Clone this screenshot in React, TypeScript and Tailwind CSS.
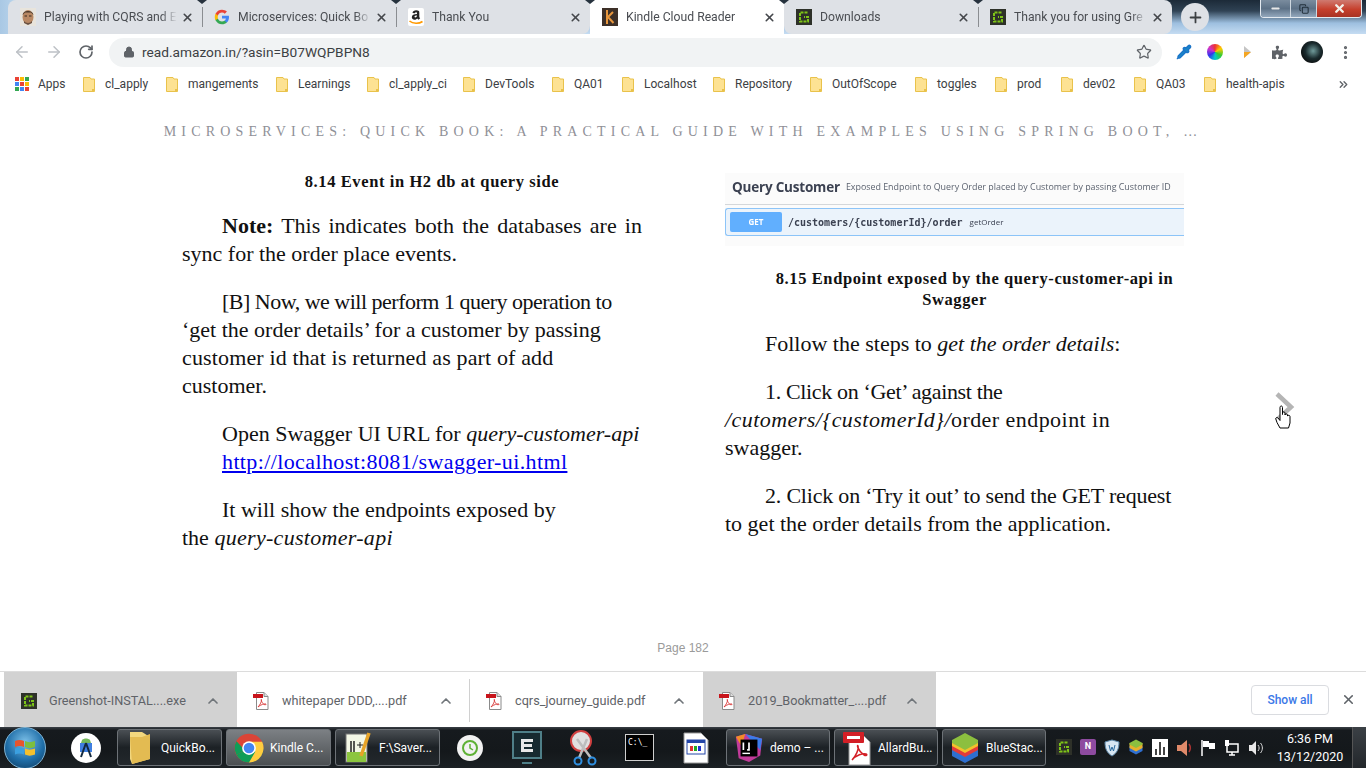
import { ArrowLeft, ArrowRight, RotateCw, Lock, Star, Pipette, EllipsisVertical, ChevronUp, ChevronsRight, X, Plus, Minus, Copy } from 'lucide-react';
import { FaPuzzlePiece } from 'react-icons/fa';
import type { ReactNode } from 'react';

const uiFont = "font-['Roboto','Liberation_Sans',sans-serif]";
const bookFont = "font-['Liberation_Serif','DejaVu_Serif',serif]";

function FaceIcon() {
  return (
    <svg width="16" height="18" viewBox="0 0 16 18">
      <rect width="16" height="18" fill="#e8e4dc" />
      <ellipse cx="8" cy="9" rx="5.5" ry="7" fill="#b98863" />
      <path d="M2.5 7C3 1.5 13 1.5 13.5 7L11 4.5H5Z" fill="#4b3a2c" />
      <rect x="4.5" y="7.5" width="2.5" height="1" fill="#3c2c20" />
      <rect x="9" y="7.5" width="2.5" height="1" fill="#3c2c20" />
      <path d="M4 13c2 2.500 6 2.500 8 0v2l-4 2-4-2Z" fill="#6a5040" />
    </svg>
  );
}

function GoogleIcon() {
  return (
    <svg width="16" height="16" viewBox="0 0 48 48">
      <path fill="#4285F4" d="M45 24.500c0-1.600-.1-3.100-.4-4.500H24v8.500h11.800c-.5 2.700-2 5-4.400 6.600v5.500h7.100C42.700 36.700 45 31.100 45 24.500z" />
      <path fill="#34A853" d="M24 46c5.900 0 10.900-2 14.500-5.300l-7.100-5.500c-2 1.300-4.500 2.100-7.400 2.100-5.700 0-10.500-3.800-12.200-9H4.500v5.700C8.100 41.100 15.500 46 24 46z" />
      <path fill="#FBBC05" d="M11.800 28.300c-.9-2.700-.9-5.800 0-8.500V14H4.500c-3 6-3 13.900 0 20z" />
      <path fill="#EA4335" d="M24 10.700c3.200 0 6.100 1.100 8.400 3.300l6.300-6.300C34.900 4.100 29.900 2 24 2 15.500 2 8.100 6.900 4.500 14l7.300 5.700c1.700-5.200 6.500-9 12.200-9z" />
    </svg>
  );
}

function AmazonIcon() {
  return (
    <svg width="16" height="18" viewBox="0 0 16 18">
      <rect width="16" height="18" rx="2" fill="#fff" />
      <path d="M11 3C9 1.500 4.800 1.800 4.500 5L7 5.300C7.200 3.800 9 3.900 9 5V6C6 6 3.800 7 3.800 9.300 3.800 12 7.500 12.500 9.200 10.500L10.500 11.800 12.200 10.300C11.300 9.300 11.300 8.800 11.300 8V5C11.300 4.200 11.300 3.500 11 3ZM9 7.600C9 9.500 6.500 10 6.500 8.800 6.500 7.800 7.700 7.600 9 7.600Z" fill="#222" />
      <path d="M1.500 13C5 16 11 16 14.500 13.500" stroke="#f90" strokeWidth="1.600" fill="none" />
    </svg>
  );
}

function KindleIcon() {
  return (
    <svg width="16" height="18" viewBox="0 0 16 18">
      <rect width="16" height="18" fill="#3d3028" />
      <path d="M5 2V16M5 10L11 4M6 9L11.500 15" stroke="#e8963c" strokeWidth="2" fill="none" />
    </svg>
  );
}

function GreenshotIcon({ size = 16 }: { size?: number }) {
  return (
    <svg width={size} height={size} viewBox="0 0 16 16">
      <rect width="16" height="16" fill="#2e3129" />
      <path d="M11.500 3.500H4V12.500H12V8H8" stroke="#7ec517" strokeWidth="2" fill="none" strokeDasharray="3 1" />
    </svg>
  );
}

function FolderIcon() {
  return (
    <svg width="12" height="15" viewBox="0 0 12 15">
      <path d="M.5.500H7L8 2H11.500V14.500H.5Z" fill="#fde293" stroke="#e9c24b" />
      <rect x="9" y="12" width="2" height="2" fill="#e9c24b" />
    </svg>
  );
}

function PdfIcon() {
  return (
    <svg width="17" height="18" viewBox="0 0 17 18">
      <path d="M3.500.5H11L15 4.500V17.500H3.500Z" fill="#fff" stroke="#8a8a8a" />
      <path d="M11 .5V4.500H15" fill="#ddd" stroke="#8a8a8a" />
      <rect x="0" y="2" width="10" height="4" fill="#c8141b" />
      <path d="M5 15C7 13 9 9 8.500 7.500 8 6.500 7.500 9 11 12.500 12.500 13 13.500 12.500 13 12 12 11.500 7.500 12.500 5 15Z" fill="none" stroke="#d83a3a" strokeWidth=".9" />
    </svg>
  );
}

function AppsIcon() {
  const colors = ['#ea4335', '#fbbc05', '#34a853', '#4285f4', '#ea4335', '#fbbc05', '#34a853', '#4285f4', '#ea4335'];
  return (
    <svg width="14" height="14" viewBox="0 0 14 14">
      {colors.map((c, i) => (
        <rect key={i} x={(i % 3) * 5} y={Math.floor(i / 3) * 5} width="4" height="4" fill={c} />
      ))}
    </svg>
  );
}

const tabs: { title: string; icon: ReactNode; active?: boolean; sep?: boolean; notch?: boolean }[] = [
  { title: 'Playing with CQRS and E', icon: <FaceIcon />, sep: true, notch: true },
  { title: 'Microservices: Quick Bo', icon: <GoogleIcon />, sep: true, notch: true },
  { title: 'Thank You', icon: <AmazonIcon />, notch: true },
  { title: 'Kindle Cloud Reader', icon: <KindleIcon />, active: true, notch: true },
  { title: 'Downloads', icon: <GreenshotIcon />, sep: true, notch: true },
  { title: 'Thank you for using Gre', icon: <GreenshotIcon /> },
];

const bookmarks = [
  { label: 'cl_apply', w: 'w-[83px]' },
  { label: 'mangements', w: 'w-[110px]' },
  { label: 'Learnings', w: 'w-[91px]' },
  { label: 'cl_apply_ci', w: 'w-[96px]' },
  { label: 'DevTools', w: 'w-[89px]' },
  { label: 'QA01', w: 'w-[70px]' },
  { label: 'Localhost', w: 'w-[91px]' },
  { label: 'Repository', w: 'w-[97px]' },
  { label: 'OutOfScope', w: 'w-[105px]' },
  { label: 'toggles', w: 'w-[80px]' },
  { label: 'prod', w: 'w-[66px]' },
  { label: 'dev02', w: 'w-[73px]' },
  { label: 'QA03', w: 'w-[70px]' },
  { label: 'health-apis', w: 'w-[110px]' },
];

const downloads: { name: string; icon: ReactNode; hover?: boolean; sep?: boolean }[] = [
  { name: 'Greenshot-INSTAL....exe', icon: <GreenshotIcon />, hover: true },
  { name: 'whitepaper DDD,....pdf', icon: <PdfIcon />, sep: true },
  { name: 'cqrs_journey_guide.pdf', icon: <PdfIcon /> },
  { name: '2019_Bookmatter_....pdf', icon: <PdfIcon />, hover: true },
];

function Tab({ title, icon, active, sep, notch }: { title: string; icon: ReactNode; active?: boolean; sep?: boolean; notch?: boolean }) {
  return (
    <div className={`relative flex h-[34px] w-[194px] items-center pl-3 pr-[8px] ${active ? 'bg-white' : ''}`}>
      <div className="flex w-4 justify-center">{icon}</div>
      <div className="ml-2 flex-1 overflow-hidden whitespace-nowrap text-[12.200px] text-[#4a4d52] [mask-image:linear-gradient(to_right,black_88%,transparent)]">{title}</div>
      <X size={13} strokeWidth={3} className="ml-1 text-[#44474b]" />
      {sep && <div className="ml-[8px] mr-[-9px] h-5 w-px bg-[#8a8d91]" />}
      {notch && (
        <svg width="10" height="4" viewBox="0 0 10 4" className="absolute right-[-5px] top-0 z-10">
          <path d="M0 0H10L5 4Z" fill="#26323e" />
        </svg>
      )}
    </div>
  );
}

function TabStrip() {
  return (
    <div className="flex h-[34px] items-start bg-[linear-gradient(to_right,#a9c8e4_0,#b9d4ec_16px,transparent_16px),linear-gradient(to_bottom,#1c2a38_0%,#2f4254_32%,#9dbfdf_68%,#c5dcf2_100%)] pl-2">
      <div className="flex rounded-tl-lg rounded-br-lg bg-[#dee1e6]">
        {tabs.slice(0, 3).map((t) => <Tab key={t.title} {...t} />)}
      </div>
      <Tab {...tabs[3]} />
      <div className="flex rounded-bl-lg rounded-r-lg bg-[#dee1e6]">
        {tabs.slice(4).map((t) => <Tab key={t.title} {...t} />)}
      </div>
      <div className="ml-[9px] mt-[3px] flex h-7 w-7 items-center justify-center rounded-full bg-[#dee1e6]">
        <Plus size={17} strokeWidth={2.500} className="text-[#3c4043]" />
      </div>
      <div className="ml-[51px] flex h-[18px] w-[102px] overflow-hidden rounded-b-[4px] border border-t-0 border-[#e4eaf0]">
        <div className="flex w-[29px] items-center justify-center bg-[linear-gradient(#7a8c9e,#5d7186_50%,#93a8bd)]"><Minus size={11} strokeWidth={4} className="text-[#e8e8e8]" /></div>
        <div className="flex w-[27px] items-center justify-center border-x border-[#cfd8e0] bg-[linear-gradient(#7a8c9e,#5d7186_50%,#93a8bd)]"><Copy size={10} strokeWidth={2.500} className="text-[#22303c]" /></div>
        <div className="flex flex-1 items-center justify-center bg-[linear-gradient(#cf7a70,#c63f2c_55%,#a83324)]"><X size={13} strokeWidth={4.500} className="text-[#f2efe8]" /></div>
      </div>
    </div>
  );
}

function Toolbar() {
  return (
    <div className="flex h-[36px] items-center bg-white">
      <ArrowLeft size={18} className="ml-[13px] text-[#bdc1c6]" />
      <ArrowRight size={18} className="ml-[14px] text-[#bdc1c6]" />
      <RotateCw size={16} strokeWidth={2.500} className="ml-[15px] text-[#5f6368]" />
      <div className="ml-[15px] flex h-[29px] w-[1053px] items-center rounded-full bg-[#f1f3f4] pl-[14px] pr-[10px]">
        <Lock size={12} fill="#5f6368" className="text-[#5f6368]" />
        <div className={`ml-[7px] flex-1 text-[13.700px] text-[#3c4043] ${uiFont}`}>read.amazon.in/?asin=B07WQPBPN8</div>
        <Star size={16} strokeWidth={1.800} className="text-[#5f6368]" />
      </div>
      <Pipette size={16} fill="#1a86c8" className="ml-[14px] text-[#1a73c8]" />
      <div className="ml-[15px] h-4 w-4 rounded-full bg-[conic-gradient(#e33,#fc0,#3c3,#0cc,#33e,#c3c,#e33)]" />
      <svg width="8" height="14" viewBox="0 0 8 14" className="ml-[20px]">
        <path d="M1 1L8 7 1 13Z" fill="#c4c4c4" />
        <path d="M1 7L8 7 1 13Z" fill="#f5a623" />
      </svg>
      <FaPuzzlePiece size={15} className="ml-[21px] text-[#5f6368]" />
      <div className="ml-[14px] h-[22px] w-[22px] rounded-full bg-[radial-gradient(circle_at_55%_45%,#6f9a9a,#1a2b2e_45%,#0c0f10_75%)]" />
      <EllipsisVertical size={17} strokeWidth={2.500} className="ml-[14px] text-[#5f6368]" />
    </div>
  );
}

function BookmarksBar() {
  return (
    <div className={`flex h-[30px] items-center bg-white pb-[2px] pl-[15px] text-[12px] text-[#3c4043] ${uiFont}`}>
      <div className="flex w-[68px] items-center gap-[9px]"><AppsIcon /><span>Apps</span></div>
      {bookmarks.map((b) => (
        <div key={b.label} className={`flex items-center gap-[10px] ${b.w}`}>
          <FolderIcon />
          <span>{b.label}</span>
        </div>
      ))}
      <ChevronsRight size={13} strokeWidth={2.500} className="ml-[23px] text-[#5f6368]" />
    </div>
  );
}

function SwaggerShot() {
  return (
    <div className="h-[73px] bg-[#fbfbfb] blur-[0.3px]">
      <div className="flex h-[31px] items-center gap-[6px] pb-[3px] pl-[7px] font-['Open_Sans',sans-serif]">
        <span className="text-[13.500px] font-bold tracking-[-0.2px] text-[#3b4151]">Query Customer</span>
        <span className="text-[8.900px] text-[#5c6370]">Exposed Endpoint to Query Order placed by Customer by passing Customer ID</span>
      </div>
      <div className="h-px bg-[#d4d7da]" />
      <div className="mt-[3px] flex h-[28px] items-center rounded-l-[3px] border border-r-0 border-[#8cc4f8] bg-[#ebf3fb] pl-[4px]">
        <div className="flex h-[20px] w-[52px] items-center justify-center rounded-[2px] bg-[#61affe] font-['Open_Sans',sans-serif] text-[8px] font-bold text-white">GET</div>
        <span className="ml-[6px] font-['DejaVu_Sans_Mono',monospace] text-[10px] font-bold text-[#3b4151]">/customers/{'{customerId}'}/order</span>
        <span className="ml-[7px] font-['Open_Sans',sans-serif] text-[8px] text-[#3b4151]">getOrder</span>
      </div>
    </div>
  );
}

function BookPage() {
  const para = 'indent-[40px] text-[22px] leading-[28px] text-[#111]';
  const caption = 'indent-[40px] text-center text-[16.500px] font-bold leading-[21px] tracking-[0.6px] text-[#111]';
  return (
    <div className={`flex h-[571px] flex-col bg-white ${bookFont}`}>
      <div className="mt-[23px] text-center text-[14px] leading-[18px] tracking-[5.200px] text-[#8f9097]">
        MICROSERVICES: QUICK BOOK: A PRACTICAL GUIDE WITH EXAMPLES USING SPRING BOOT, …
      </div>
      <div className="mt-[30px] flex flex-1 pl-[182px]">
        <div className="flex w-[460px] flex-col gap-5">
          <div className={caption}>8.14 Event in H2 db at query side</div>
          <p className={para}>
            <span className="block [text-align-last:justify]"><b>Note:</b> This indicates both the databases are in</span>
            <span className="block indent-0">sync for the order place events.</span>
          </p>
          <p className={para}>
            <span className="tracking-[-0.5px]">[B] Now, we will perform 1 query operation to</span><br />
            ‘get the order details’ for a customer by passing<br />
            <span className="tracking-[0.14px]">customer id that is returned as part of add</span><br />
            customer.
          </p>
          <p className={para}>
            Open Swagger UI URL for <i>query-customer-api</i><br />
            <span className="block"><a className="tracking-[0.38px] text-[#0000ee] underline">http://localhost:8081/swagger-ui.html</a></span>
          </p>
          <p className={para}>
            It will show the endpoints exposed by<br />
            the <i className="tracking-[0.3px]">query-customer-api</i>
          </p>
        </div>
        <div className="ml-[83px] mt-[2px] flex w-[459px] flex-col">
          <SwaggerShot />
          <div className={`${caption} mt-[22px]`}>
            8.15 Endpoint exposed by the query-customer-api in<br />Swagger
          </div>
          <div className="mt-5 flex flex-col gap-5">
            <p className={para}>Follow the steps to <i>get the order details</i>:</p>
            <p className={para}>
              <span className="tracking-[-0.35px]">1. Click on ‘Get’ against the</span><br />
              <span className="tracking-[0.45px]"><i>/cutomers/{'{customerId}'}/</i>order endpoint in</span><br />
              swagger.
            </p>
            <p className={para}>
              <span className="tracking-[-0.2px]">2. Click on ‘Try it out’ to send the GET request</span><br />
              to get the order details from the application.
            </p>
          </div>
        </div>
        <div className="relative ml-[91px] mt-[221px] h-[30px] w-[20px]">
          <svg width="20" height="30" viewBox="0 0 20 30">
            <path d="M2 2L16 15 2 28" fill="none" stroke="#b5b5b5" strokeWidth="4.500" />
          </svg>
          <svg width="17" height="24" viewBox="0 0 17 24" className="absolute left-0 top-[13px]">
            <path d="M5 10V2.500C5 .5 7.500 .5 7.500 2.500V9.500 8C7.500 6.500 10 6.500 10 8V10C10 8.500 12.500 8.500 12.500 10V11C12.500 10 15 10 15 11.500V18L13.500 23H5L2 17.500 .8 14C.5 12.500 2 12 3 13L5 15.500Z" fill="#fff" stroke="#000" strokeWidth="1" />
          </svg>
        </div>
      </div>
      <div className="mb-[14px] text-center font-['Liberation_Sans',sans-serif] text-[12px] text-[#9a9a9a]">Page 182</div>
    </div>
  );
}

function DownloadsBar() {
  return (
    <div className={`flex h-[56px] items-stretch border-t border-[#dcdcdc] bg-white pl-1 text-[12.700px] text-[#5f6368] ${uiFont}`}>
      {downloads.map((d) => (
        <div key={d.name} className={`relative flex w-[233px] items-center pl-4 pt-[2px] ${d.hover ? 'bg-[#d2d2d2]' : ''}`}>
          <div className="flex w-[17px] justify-center">{d.icon}</div>
          <span className="ml-[12px] w-[156px] whitespace-nowrap">{d.name}</span>
          <ChevronUp size={16} strokeWidth={2.500} className="text-[#70757a]" />
          {d.sep && <div className="absolute right-0 top-[7px] h-[43px] w-px bg-[#d0d0d0]" />}
        </div>
      ))}
      <div className="ml-auto mr-[10px] flex items-center gap-[12px]">
        <div className="flex h-[30px] w-[78px] items-center justify-center rounded-[4px] border border-[#dadce0] text-[12px] font-medium text-[#3b78e7]">Show all</div>
        <X size={15} strokeWidth={2.500} className="text-[#5f6368]" />
      </div>
    </div>
  );
}

function TaskButton({ label, icon, active, width = 'w-[105px]' }: { label: string; icon: ReactNode; active?: boolean; width?: string }) {
  return (
    <div className={`flex h-[37px] items-center gap-[6px] overflow-hidden rounded-[3px] border border-[#6d7277] pl-[7px] ${width} ${active ? 'bg-[linear-gradient(#7c8084,#4b4f52)]' : 'bg-[linear-gradient(#4a4f54,#1c2125_50%,#23282c)]'}`}>
      <div className="flex w-[30px] shrink-0 justify-center">{icon}</div>
      <span className="whitespace-nowrap text-[12px] text-white">{label}</span>
    </div>
  );
}

function WinFlag() {
  return (
    <div className="flex h-[42px] w-[42px] items-center justify-center rounded-full border border-[#7fb6d8] bg-[radial-gradient(circle_at_50%_35%,#7cc0e8,#1f6ea8_55%,#0c3559)]">
      <svg width="22" height="20" viewBox="0 0 22 20">
        <path d="M1 3C4 1.500 7 1.500 10 3V9C7 7.500 4 7.500 1 9Z" fill="#e8552d" />
        <path d="M11 3C14 4.500 17 4.500 21 3V9C17 10.500 14 10.500 11 9Z" fill="#7cbf3f" />
        <path d="M1 10.500C4 9 7 9 10 10.500V16.500C7 15 4 15 1 16.500Z" fill="#3ba0e0" />
        <path d="M11 10.500C14 12 17 12 21 10.500V16.500C17 18 14 18 11 16.500Z" fill="#f5c02c" />
      </svg>
    </div>
  );
}

function ChromeIcon() {
  return (
    <svg width="30" height="30" viewBox="0 0 48 48">
      <circle cx="24" cy="24" r="23" fill="#db4437" />
      <path d="M24 24L4 35A23 23 0 0 1 4 13L14 24Z" fill="#0f9d58" />
      <path d="M24 24L4 35A23 23 0 0 0 24 47 23 23 0 0 0 47 24H24Z" fill="#0f9d58" />
      <path d="M24 14H45A23 23 0 0 1 24 47L34 30Z" fill="#ffcd40" />
      <circle cx="24" cy="24" r="11" fill="#fff" />
      <circle cx="24" cy="24" r="8.500" fill="#4285f4" />
    </svg>
  );
}

function Taskbar() {
  return (
    <div className={`flex h-[41px] items-center bg-[linear-gradient(#3a4046_0,#161a1e_8%,#14181b_60%,#1b2024)] pl-1 ${uiFont}`}>
      <WinFlag />
      <div className="ml-[25px] flex h-[30px] w-[30px] items-center justify-center rounded-full bg-white">
        <svg width="18" height="22" viewBox="0 0 18 22">
          <path d="M3 6H15V15H3Z" fill="#3f7fe0" />
          <path d="M5 3C7 1 11 1 13 3L14 6H4Z" fill="#74b85c" />
          <path d="M9 6L4 20M9 6L14 20" stroke="#13293f" strokeWidth="2" />
        </svg>
      </div>
      <div className="ml-[16px] flex gap-1">
        <TaskButton label="QuickBo..." icon={
          <svg width="24" height="34" viewBox="0 0 24 34">
            <path d="M2 1H14L22 6V28L4 33 2 28Z" fill="#f2d77e" />
            <path d="M2 6L14 6 22 3V28L4 33Z" fill="#e3bb52" />
          </svg>
        } />
        <TaskButton label="Kindle C..." icon={<ChromeIcon />} active />
        <TaskButton label="F:\Saver..." icon={
          <svg width="28" height="32" viewBox="0 0 28 32">
            <rect x="2" y="2" width="21" height="28" fill="#f3f7e6" stroke="#777" />
            <rect x="3" y="20" width="19" height="10" fill="#8cc63f" />
            <path d="M7 9V20M10 9V20" stroke="#222" strokeWidth="1.500" />
            <path d="M13 13H19M16 10V16" stroke="#222" />
            <path d="M25 1L17 24" stroke="#e8a428" strokeWidth="3.500" />
          </svg>
        } />
      </div>
      <div className="ml-[2px] flex w-[56px] justify-center">
        <div className="flex h-[26px] w-[26px] items-center justify-center rounded-full bg-[#f2f2f2]">
          <svg width="18" height="18" viewBox="0 0 18 18">
            <circle cx="9" cy="9" r="7" fill="none" stroke="#5eb135" strokeWidth="2" />
            <path d="M9 5V9L12 11" fill="none" stroke="#5eb135" strokeWidth="1.500" />
          </svg>
        </div>
      </div>
      <div className="flex w-[57px] justify-center">
        <svg width="30" height="34" viewBox="0 0 30 34">
          <rect x="1" y="1" width="28" height="26" fill="#172a30" stroke="#4f7f88" strokeWidth="2" />
          <path d="M9 8H21V11H12V13H20V16H12V18H21V21H9Z" fill="#e8e8e8" />
          <rect x="10" y="31" width="10" height="2" fill="#4f7f88" />
        </svg>
      </div>
      <div className="flex w-[56px] justify-center">
        <svg width="28" height="36" viewBox="0 0 28 36">
          <circle cx="12" cy="11" r="10" fill="#e0e0e0" stroke="#d04040" strokeWidth="2" />
          <path d="M8 9L22 28M18 9L10 28" stroke="#bdbdbd" strokeWidth="2.500" />
          <circle cx="9" cy="31" r="3.500" fill="none" stroke="#2f8fe0" strokeWidth="2" />
          <circle cx="23" cy="31" r="3.500" fill="none" stroke="#2f8fe0" strokeWidth="2" />
        </svg>
      </div>
      <div className="flex w-[57px] justify-center">
        <div className="h-[27px] w-[29px] border border-[#cfcfcf] bg-black pl-[2px] pt-[2px] font-['DejaVu_Sans_Mono',monospace] text-[8px] leading-[12px] text-white">C:\_</div>
      </div>
      <div className="flex w-[56px] justify-center">
        <svg width="26" height="32" viewBox="0 0 26 32">
          <path d="M1 1H18L25 8V31H1Z" fill="#fff" stroke="#999" />
          <rect x="4" y="8" width="18" height="14" fill="#fff" stroke="#2446a8" />
          <rect x="4" y="8" width="18" height="3" fill="#2446a8" />
          <rect x="7" y="14" width="3" height="5" fill="#d33" />
          <rect x="11" y="14" width="3" height="5" fill="#2a2" />
          <rect x="15" y="14" width="3" height="5" fill="#23c" />
        </svg>
      </div>
      <div className="ml-[2px] flex gap-1">
        <TaskButton width="w-[104px]" label="demo – ..." icon={
          <svg width="32" height="32" viewBox="0 0 32 32">
            <path d="M2 4L12 1 30 6 28 24 16 31 5 27Z" fill="#c23b9a" />
            <path d="M12 1L30 6 28 18Z" fill="#3b7bea" />
            <path d="M2 4L12 1 8 14Z" fill="#f28c28" />
            <rect x="7" y="7" width="18" height="18" fill="#000" />
            <rect x="9" y="21" width="8" height="1.500" fill="#fff" />
            <path d="M10 10V18M14 18H16V10" fill="none" stroke="#fff" strokeWidth="1.800" />
          </svg>
        } />
        <TaskButton width="w-[104px]" label="AllardBu..." icon={
          <svg width="30" height="36" viewBox="0 0 30 36">
            <path d="M7 6H22L28 12V35H7Z" fill="#fff" stroke="#999" />
            <rect x="1" y="2" width="21" height="11" rx="1" fill="#d31f26" />
            <rect x="5" y="6" width="13" height="3" fill="#fff" />
            <path d="M10 30C14 26 17 19 16 16 15 14 15 20 22 25 24 26 26 25 24 24 21 23 14 25 10 30Z" fill="none" stroke="#d31f26" strokeWidth="1.500" />
          </svg>
        } />
        <TaskButton width="w-[104px]" label="BlueStac..." icon={
          <svg width="30" height="32" viewBox="0 0 30 32">
            <path d="M2 14L15 20 28 14V24L15 31 2 24Z" fill="#2f6fd0" />
            <path d="M2 11L15 17 28 11V18L15 25 2 18Z" fill="#e23b3b" />
            <path d="M2 8L15 14 28 8V14L15 21 2 14Z" fill="#f3c12b" />
            <path d="M2 8L15 1 28 8V11L15 18 2 11Z" fill="#8cbf3f" />
          </svg>
        } />
      </div>
      <div className="ml-[6px] flex">
        <div className="flex w-6 justify-center"><GreenshotIcon /></div>
        <div className="flex w-6 justify-center">
          <div className="flex h-4 w-4 items-center justify-center rounded-[2px] bg-[#8e4ba0] text-[9px] font-bold text-white">N</div>
        </div>
        <div className="flex w-6 justify-center">
          <svg width="16" height="18" viewBox="0 0 16 18"><path d="M8 1L15 3C15 10 13 14 8 17 3 14 1 10 1 3Z" fill="#d7e6f2" stroke="#5d87a8" /><path d="M5 6L6.500 12 8 8 9.500 12 11 6" stroke="#2a6a9e" fill="none" /></svg>
        </div>
        <div className="flex w-6 justify-center">
          <svg width="16" height="16" viewBox="0 0 30 32">
            <path d="M2 14L15 20 28 14V24L15 31 2 24Z" fill="#2f6fd0" />
            <path d="M2 8L15 14 28 8V18L15 25 2 18Z" fill="#e8b02b" />
            <path d="M2 8L15 1 28 8V11L15 18 2 11Z" fill="#8cbf3f" />
          </svg>
        </div>
        <div className="flex w-6 justify-center">
          <svg width="16" height="18" viewBox="0 0 16 18"><rect width="16" height="18" fill="#fff" /><rect x="3" y="10" width="2" height="6" fill="#444" /><rect x="7" y="3" width="2" height="13" fill="#444" /><rect x="11" y="8" width="2" height="8" fill="#444" /></svg>
        </div>
        <div className="flex w-6 justify-center">
          <svg width="16" height="18" viewBox="0 0 16 18"><path d="M1 6H5L11 1V17L5 12H1Z" fill="#e08a6a" /><path d="M13 5C15 8 15 10 13 13" fill="none" stroke="#a33" strokeWidth="1.500" /></svg>
        </div>
        <div className="flex w-6 justify-center">
          <svg width="16" height="18" viewBox="0 0 16 18"><path d="M2 1V17" stroke="#fff" strokeWidth="1.500" /><path d="M3 2H9V4H15V10H9V8H3Z" fill="#fff" /></svg>
        </div>
        <div className="flex w-6 justify-center">
          <svg width="16" height="18" viewBox="0 0 16 18"><rect x="3" y="5" width="11" height="8" fill="none" stroke="#fff" strokeWidth="1.500" /><path d="M8 13V16M5 16H11" stroke="#fff" strokeWidth="1.500" /><rect x="1" y="1" width="4" height="6" fill="#fff" /></svg>
        </div>
        <div className="flex w-6 justify-center">
          <svg width="16" height="18" viewBox="0 0 16 18"><path d="M1 6H4L8 2V16L4 12H1Z" fill="#e8e8e8" /><path d="M10 6C11.500 8 11.500 10 10 12M12.500 4C15 7 15 11 12.500 14" fill="none" stroke="#ddd" /></svg>
        </div>
      </div>
      <div className="flex flex-1 flex-col items-center text-[12.500px] leading-[18px] text-white">
        <span>6:36 PM</span>
        <span>13/12/2020</span>
      </div>
      <div className="h-[41px] w-[14px] border-l border-[#555] bg-[linear-gradient(#3b4045,#23272b)]" />
    </div>
  );
}

export default function App() {
  return (
    <div className={`flex h-[768px] w-[1366px] flex-col overflow-hidden bg-white ${uiFont}`}>
      <TabStrip />
      <Toolbar />
      <BookmarksBar />
      <BookPage />
      <DownloadsBar />
      <Taskbar />
    </div>
  );
}
